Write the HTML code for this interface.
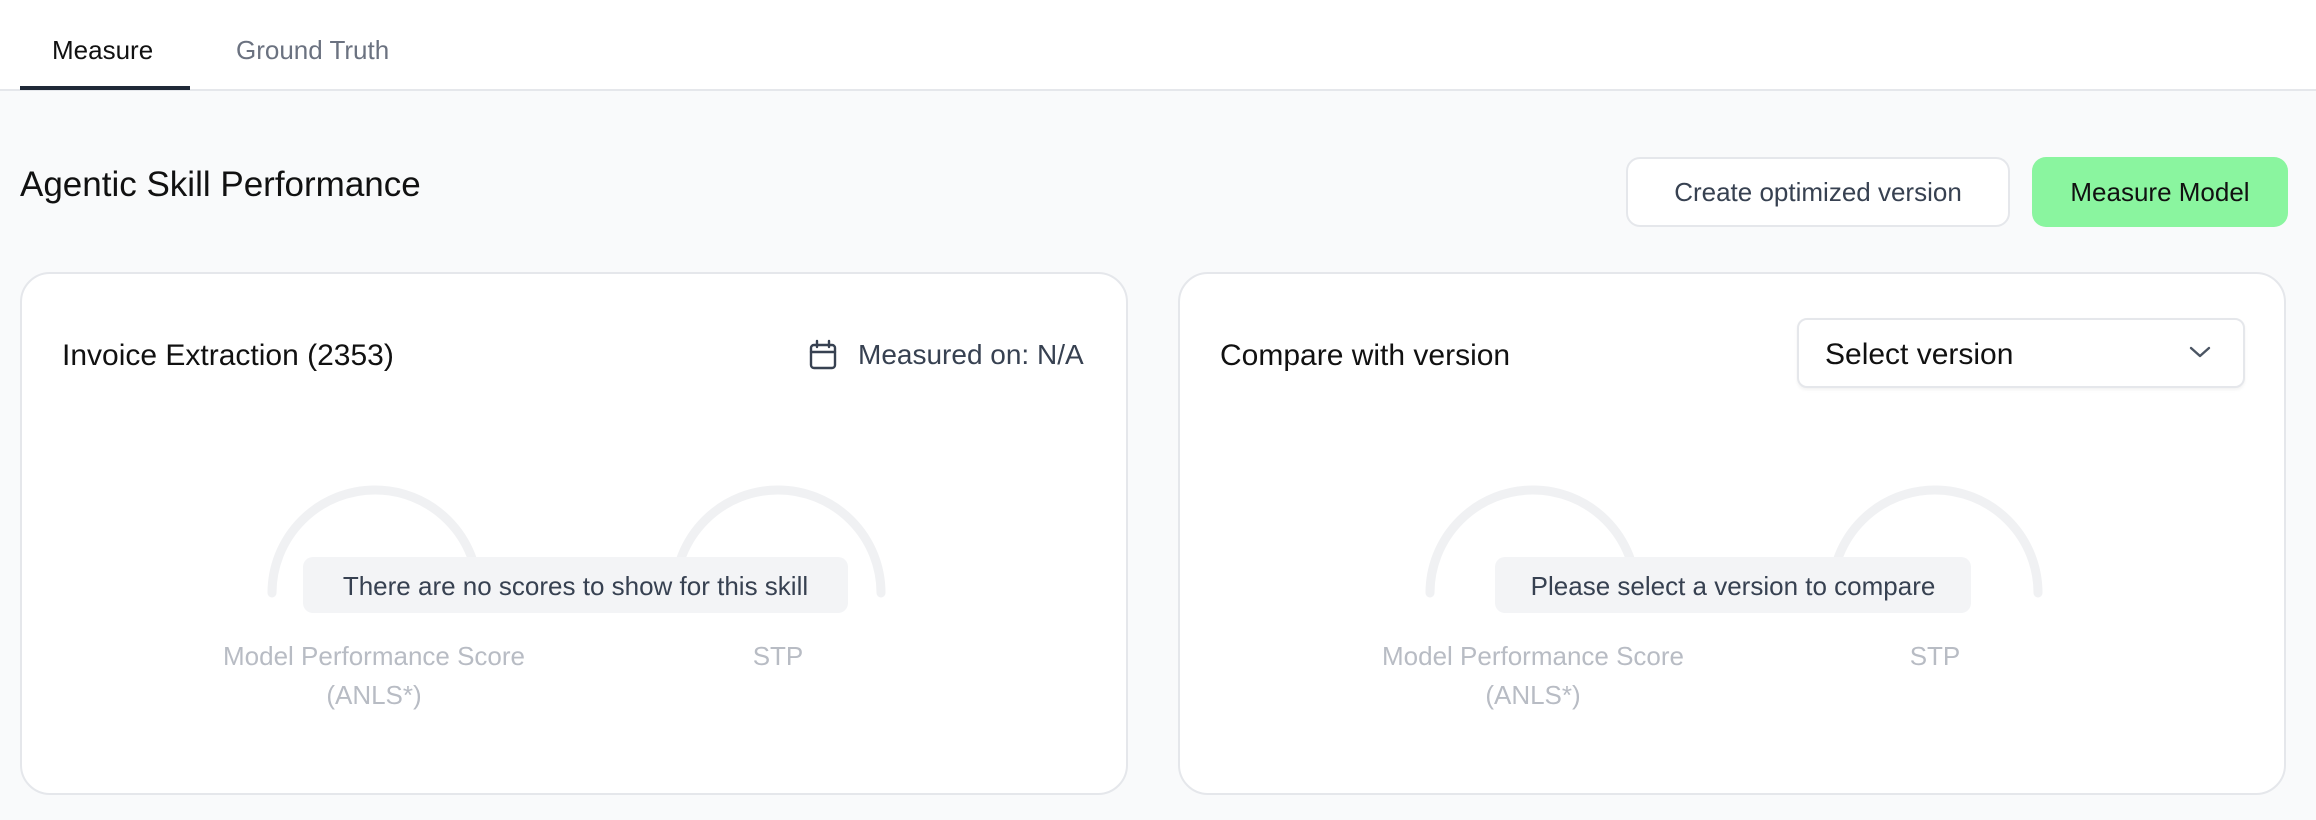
<!DOCTYPE html>
<html><head><meta charset="utf-8"><style>
*{box-sizing:border-box;margin:0;padding:0}
body{width:2316px;height:820px;background:#f9fafb;font-family:"Liberation Sans",sans-serif;position:relative;overflow:hidden;color:#111}
.hdr{position:absolute;left:0;top:0;width:2316px;height:91px;background:#fff;border-bottom:2px solid #e5e7eb}
.tab{position:absolute;top:35px;font-size:26px}
.ul{position:absolute;left:20px;top:86px;width:170px;height:4px;background:#1f2937}
.abs{position:absolute;white-space:nowrap}
.btn{position:absolute;height:70px;border-radius:14px;font-size:26px;display:flex;align-items:center;justify-content:center}
.card{position:absolute;top:272px;width:1108px;height:523px;background:#fff;border:2px solid #e5e7eb;border-radius:30px}
.ctitle{position:absolute;top:339px;font-size:30px;color:#111}
.ov{position:absolute;top:557px;height:56px;background:#f3f4f6;border-radius:10px;font-size:26px;color:#374151;display:flex;align-items:center;justify-content:center;padding-top:2px}
.lbl{position:absolute;font-size:26px;color:#b8bcc4;text-align:center;line-height:39px}
</style></head><body>
<div class="hdr">
<div class="tab" style="left:52px;color:#111">Measure</div>
<div class="tab" style="left:236px;color:#6b7280">Ground Truth</div>
<div class="ul"></div>
</div>
<div class="abs" style="left:20px;top:165px;font-size:35px;color:#111">Agentic Skill Performance</div>
<div class="btn" style="left:1626px;top:157px;width:384px;background:#fff;border:2px solid #e5e7eb;color:#374151">Create optimized version</div>
<div class="btn" style="left:2032px;top:157px;width:256px;background:#8af59f;color:#111">Measure Model</div>

<div class="card" style="left:20px"></div>
<div class="card" style="left:1178px"></div>

<div class="ctitle" style="left:62px">Invoice Extraction (2353)</div>
<svg class="abs" style="left:808px;top:339px" width="30" height="32" viewBox="0 0 30 32" fill="none" stroke="#374151" stroke-width="2.4" stroke-linecap="round"><rect x="3" y="6" width="24" height="23" rx="3"/><line x1="3" y1="13" x2="27" y2="13"/><line x1="9" y1="2" x2="9" y2="8"/><line x1="21" y1="2" x2="21" y2="8"/></svg>
<div class="abs" style="left:858px;top:339px;font-size:28px;color:#374151">Measured on: N/A</div>

<div class="ctitle" style="left:1220px">Compare with version</div>
<div class="abs" style="left:1797px;top:318px;width:448px;height:70px;background:#fff;border:2px solid #e5e7eb;border-radius:10px;box-shadow:0 2px 3px rgba(0,0,0,.05)"></div>
<div class="abs" style="left:1825px;top:338px;font-size:30px;color:#111">Select version</div>
<svg class="abs" style="left:2188px;top:344px" width="24" height="16" viewBox="0 0 24 16" fill="none" stroke="#4b5563" stroke-width="2.4" stroke-linecap="round" stroke-linejoin="round"><path d="M3 4 L12 12 L21 4"/></svg>

<svg class="abs" style="left:0;top:0" width="2316" height="820" fill="none" stroke="#f0f1f3" stroke-width="9" stroke-linecap="round">
<path d="M272 593 A103 103 0 0 1 478 593"/>
<path d="M675 593 A103 103 0 0 1 881 593"/>
<path d="M1430 593 A103 103 0 0 1 1636 593"/>
<path d="M1832 593 A103 103 0 0 1 2038 593"/>
</svg>

<div class="ov" style="left:303px;width:545px">There are no scores to show for this skill</div>
<div class="ov" style="left:1495px;width:476px">Please select a version to compare</div>

<div class="lbl" style="left:174px;width:400px;top:637px">Model Performance Score<br>(ANLS*)</div>
<div class="lbl" style="left:678px;width:200px;top:637px">STP</div>
<div class="lbl" style="left:1333px;width:400px;top:637px">Model Performance Score<br>(ANLS*)</div>
<div class="lbl" style="left:1835px;width:200px;top:637px">STP</div>
</body></html>
